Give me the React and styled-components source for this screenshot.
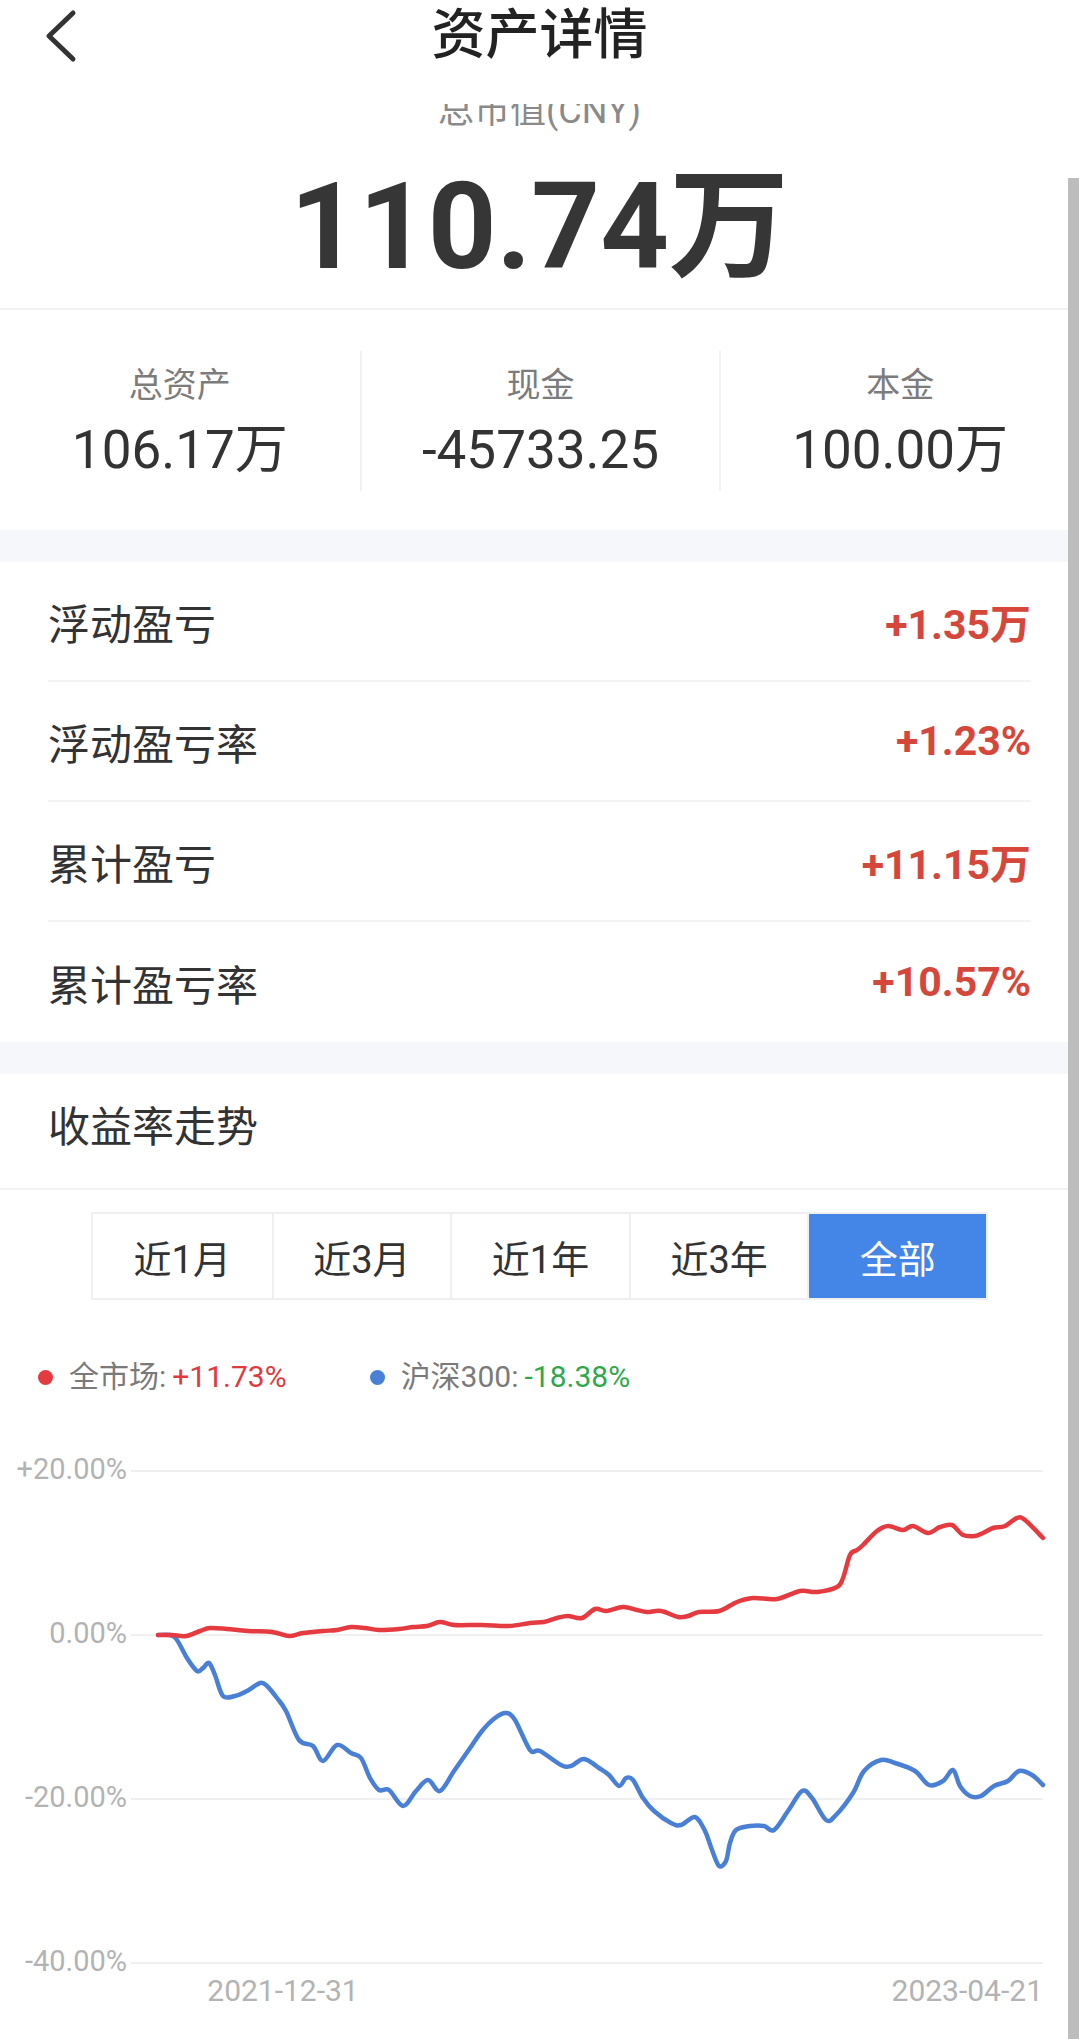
import React from 'react'
import styled, { createGlobalStyle } from 'styled-components'

const GlobalStyle = createGlobalStyle`
  html, body {
    margin: 0;
    padding: 0;
    background: #fff;
  }
  body {
    font-family: Roboto, "Noto Sans CJK SC", sans-serif;
    color: #333;
  }
  * {
    box-sizing: border-box;
  }
`

const stats = [
  { label: '总资产', value: '106.17万' },
  { label: '现金', value: '-45733.25' },
  { label: '本金', value: '100.00万' },
]

const profits = [
  { label: '浮动盈亏', value: '+1.35万' },
  { label: '浮动盈亏率', value: '+1.23%' },
  { label: '累计盈亏', value: '+11.15万' },
  { label: '累计盈亏率', value: '+10.57%' },
]

const ranges = ['近1月', '近3月', '近1年', '近3年', '全部']

// page coordinates, traced from the screen
const marketPts = [
  [158, 1637], [172, 1637], [186, 1638], [200, 1633], [210, 1630], [227, 1631], [248, 1633],
  [272, 1634], [289, 1638], [303, 1635], [323, 1633], [337, 1632], [351, 1629], [365, 1630],
  [379, 1632], [399, 1631], [413, 1629], [427, 1628], [440, 1624], [454, 1627], [482, 1627],
  [509, 1628], [530, 1625], [544, 1624], [557, 1620], [568, 1618], [582, 1620], [595, 1611],
  [606, 1613], [623, 1609], [637, 1612], [647, 1614], [661, 1613], [678, 1619], [688, 1618],
  [699, 1614], [719, 1613], [737, 1604], [753, 1600], [777, 1601], [800, 1593], [817, 1594],
  [837, 1589], [843, 1580], [850, 1557], [857, 1552], [863, 1547], [877, 1533], [888, 1528],
  [903, 1532], [913, 1528], [928, 1535], [940, 1529], [952, 1527], [963, 1537], [975, 1538],
  [983, 1535], [993, 1530], [1005, 1528], [1017, 1520], [1025, 1522], [1043, 1540],
]

const hs300Pts = [
  [158, 1637], [170, 1637], [177, 1642], [187, 1660], [197, 1673], [203, 1670], [209, 1665],
  [215, 1677], [223, 1698], [235, 1698], [247, 1693], [260, 1685], [267, 1688], [277, 1700],
  [286, 1713], [299, 1742], [313, 1748], [323, 1763], [337, 1747], [351, 1755], [361, 1760],
  [370, 1780], [379, 1792], [389, 1792], [403, 1808], [416, 1793], [428, 1782], [440, 1793],
  [454, 1773], [468, 1753], [482, 1733], [495, 1720], [506, 1715], [515, 1722], [530, 1752],
  [540, 1753], [561, 1767], [571, 1768], [584, 1761], [599, 1770], [609, 1777], [619, 1788],
  [626, 1780], [633, 1782], [643, 1800], [654, 1813], [671, 1825], [681, 1827], [695, 1819],
  [705, 1833], [712, 1852], [719, 1868], [726, 1863], [730, 1845], [736, 1832], [750, 1828],
  [764, 1828], [774, 1832], [788, 1813], [802, 1793], [812, 1800], [826, 1822], [836, 1817],
  [853, 1795], [864, 1773], [881, 1762], [895, 1765], [915, 1773], [929, 1787], [943, 1783],
  [953, 1772], [960, 1788], [970, 1798], [981, 1798], [994, 1788], [1008, 1783], [1019, 1773],
  [1032, 1777], [1043, 1787],
]

const yTicks = [
  { label: '+20.00%', y: 1473 },
  { label: '0.00%', y: 1637 },
  { label: '-20.00%', y: 1801 },
  { label: '-40.00%', y: 1965 },
]

const smoothPath = (pts) => {
  let d = `M${pts[0][0]},${pts[0][1]}`
  for (let i = 0; i < pts.length - 1; i++) {
    const p0 = pts[i - 1] || pts[i]
    const p1 = pts[i]
    const p2 = pts[i + 1]
    const p3 = pts[i + 2] || p2
    const c1x = p1[0] + (p2[0] - p0[0]) / 6
    const c1y = p1[1] + (p2[1] - p0[1]) / 6
    const c2x = p2[0] - (p3[0] - p1[0]) / 6
    const c2y = p2[1] - (p3[1] - p1[1]) / 6
    d += ` C${c1x.toFixed(1)},${c1y.toFixed(1)} ${c2x.toFixed(1)},${c2y.toFixed(1)} ${p2[0]},${p2[1]}`
  }
  return d
}

const App = () => {
  return (
    <Page>
      <GlobalStyle />
      <Header>
        <BackButton>
          <svg width="34" height="54" viewBox="0 0 34 54">
            <path d="M28 4 L4 27 L28 50" fill="none" stroke="#333" strokeWidth="5" strokeLinecap="round" strokeLinejoin="round" />
          </svg>
        </BackButton>
        <Title>资产详情</Title>
        <span />
      </Header>

      <Summary>
        <SummaryLabel>总市值(CNY)</SummaryLabel>
        <BigValue>110.74万</BigValue>
      </Summary>

      <Stats>
        {stats.map((s) => (
          <StatCol key={s.label}>
            <StatLabel>{s.label}</StatLabel>
            <StatValue>{s.value}</StatValue>
          </StatCol>
        ))}
      </Stats>

      <Gap />

      <ProfitList>
        {profits.map((p, i) => (
          <ProfitRow key={p.label} $last={i === profits.length - 1}>
            <ProfitLabel>{p.label}</ProfitLabel>
            <ProfitValue>{p.value}</ProfitValue>
          </ProfitRow>
        ))}
      </ProfitList>

      <Gap />

      <TrendHeader>
        <TrendTitle>收益率走势</TrendTitle>
      </TrendHeader>

      <Tabs>
        {ranges.map((r) => (
          <Tab key={r} $active={r === '全部'}>{r}</Tab>
        ))}
      </Tabs>

      <Legend>
        <LegendItem>
          <Dot $color="#e53a3f" />
          <LegendName>全市场:</LegendName>
          <LegendValue $color="#e0393e">+11.73%</LegendValue>
        </LegendItem>
        <LegendItem>
          <Dot $color="#4a7fd6" />
          <LegendName>沪深300:</LegendName>
          <LegendValue $color="#2ea84a">-18.38%</LegendValue>
        </LegendItem>
      </Legend>

      <Chart width="1079" height="640" viewBox="0 1399 1079 640">
        {yTicks.map((t) => (
          <g key={t.label}>
            <line x1="131" x2="1043" y1={t.y} y2={t.y} stroke="#f0f0f0" strokeWidth="2" />
            <text x="127" y={t.y} textAnchor="end" dominantBaseline="middle" fontSize="29" fill="#b3b3b3">{t.label}</text>
          </g>
        ))}
        <path d={smoothPath(hs300Pts)} fill="none" stroke="#4a7fd6" strokeWidth="4.5" strokeLinejoin="round" strokeLinecap="round" />
        <path d={smoothPath(marketPts)} fill="none" stroke="#e53a3f" strokeWidth="4.5" strokeLinejoin="round" strokeLinecap="round" />
        <text x="283" y="1995" textAnchor="middle" dominantBaseline="middle" fontSize="30" fill="#b3b3b3">2021-12-31</text>
        <text x="1043" y="1995" textAnchor="end" dominantBaseline="middle" fontSize="30" fill="#b3b3b3">2023-04-21</text>
      </Chart>

      <ScrollBar />
    </Page>
  )
}

const Page = styled.div`
  position: relative;
  width: 1079px;
  min-height: 2039px;
  overflow: hidden;
  background: #fff;
`

const Header = styled.div`
  display: grid;
  grid-template-columns: 1fr auto 1fr;
  align-items: start;
  height: 104px;
  background: #fff;
`

const BackButton = styled.div`
  display: flex;
  align-items: center;
  height: 72px;
  padding-left: 45px;
`

const Title = styled.h1`
  margin: 0;
  font-size: 54px;
  font-weight: 500;
  line-height: 72px;
  color: #222;
`

const Summary = styled.div`
  display: flex;
  flex-direction: column;
  align-items: center;
  height: 206px;
  overflow: hidden;
  border-bottom: 2px solid #f1f1f1;
`

const SummaryLabel = styled.div`
  margin-top: -14px;
  font-size: 36px;
  line-height: 42px;
  color: #8a8a8a;
`

const BigValue = styled.div`
  margin-top: 25px;
  font-size: 120px;
  font-weight: 700;
  line-height: 140px;
  color: #363636;
`

const Stats = styled.div`
  display: grid;
  grid-template-columns: repeat(3, 1fr);
  padding: 41px 0 39px;
`

const StatCol = styled.div`
  display: flex;
  flex-direction: column;
  align-items: center;
  height: 140px;
  padding-top: 12px;
  & + & {
    border-left: 2px solid #f2f2f2;
  }
`

const StatLabel = styled.div`
  font-size: 34px;
  line-height: 44px;
  color: #7c7c7c;
`

const StatValue = styled.div`
  margin-top: 11px;
  font-size: 53px;
  line-height: 64px;
  color: #333;
`

const Gap = styled.div`
  height: 32px;
  background: #f6f7fa;
`

const ProfitList = styled.div`
  padding: 0 48px;
`

const ProfitRow = styled.div`
  display: flex;
  align-items: center;
  justify-content: space-between;
  height: 120px;
  border-bottom: ${(p) => (p.$last ? 'none' : '2px solid #f3f3f3')};
`

const ProfitLabel = styled.div`
  font-size: 42px;
  color: #333;
`

const ProfitValue = styled.div`
  font-size: 41px;
  font-weight: 700;
  color: #d6473b;
`

const TrendHeader = styled.div`
  height: 116px;
  padding: 0 48px;
  border-bottom: 2px solid #f2f2f2;
`

const TrendTitle = styled.h2`
  margin: 0;
  font-size: 42px;
  font-weight: 400;
  line-height: 108px;
  color: #333;
`

const Tabs = styled.div`
  display: grid;
  grid-template-columns: repeat(5, 1fr);
  width: 897px;
  height: 88px;
  margin: 22px auto 0;
  border: 2px solid #efefef;
`

const Tab = styled.div`
  display: flex;
  align-items: center;
  justify-content: center;
  font-size: 38px;
  color: ${(p) => (p.$active ? '#fff' : '#333')};
  background: ${(p) => (p.$active ? '#4486e8' : '#fff')};
  & + & {
    border-left: 2px solid #efefef;
  }
`

const Legend = styled.div`
  display: flex;
  align-items: center;
  gap: 83px;
  height: 40px;
  margin-top: 57px;
  padding-left: 38px;
`

const LegendItem = styled.div`
  display: flex;
  align-items: center;
  font-size: 30px;
  line-height: 40px;
`

const Dot = styled.span`
  width: 15px;
  height: 15px;
  margin-right: 16px;
  border-radius: 50%;
  background: ${(p) => p.$color};
`

const LegendName = styled.span`
  color: #7a7a7a;
  margin-right: 6px;
`

const LegendValue = styled.span`
  color: ${(p) => p.$color};
`

const Chart = styled.svg`
  display: block;
  font-family: Roboto, "Noto Sans CJK SC", sans-serif;
`

const ScrollBar = styled.div`
  position: absolute;
  top: 178px;
  right: 0;
  bottom: 0;
  width: 11px;
  background: #bdbdbd;
`

export default App
